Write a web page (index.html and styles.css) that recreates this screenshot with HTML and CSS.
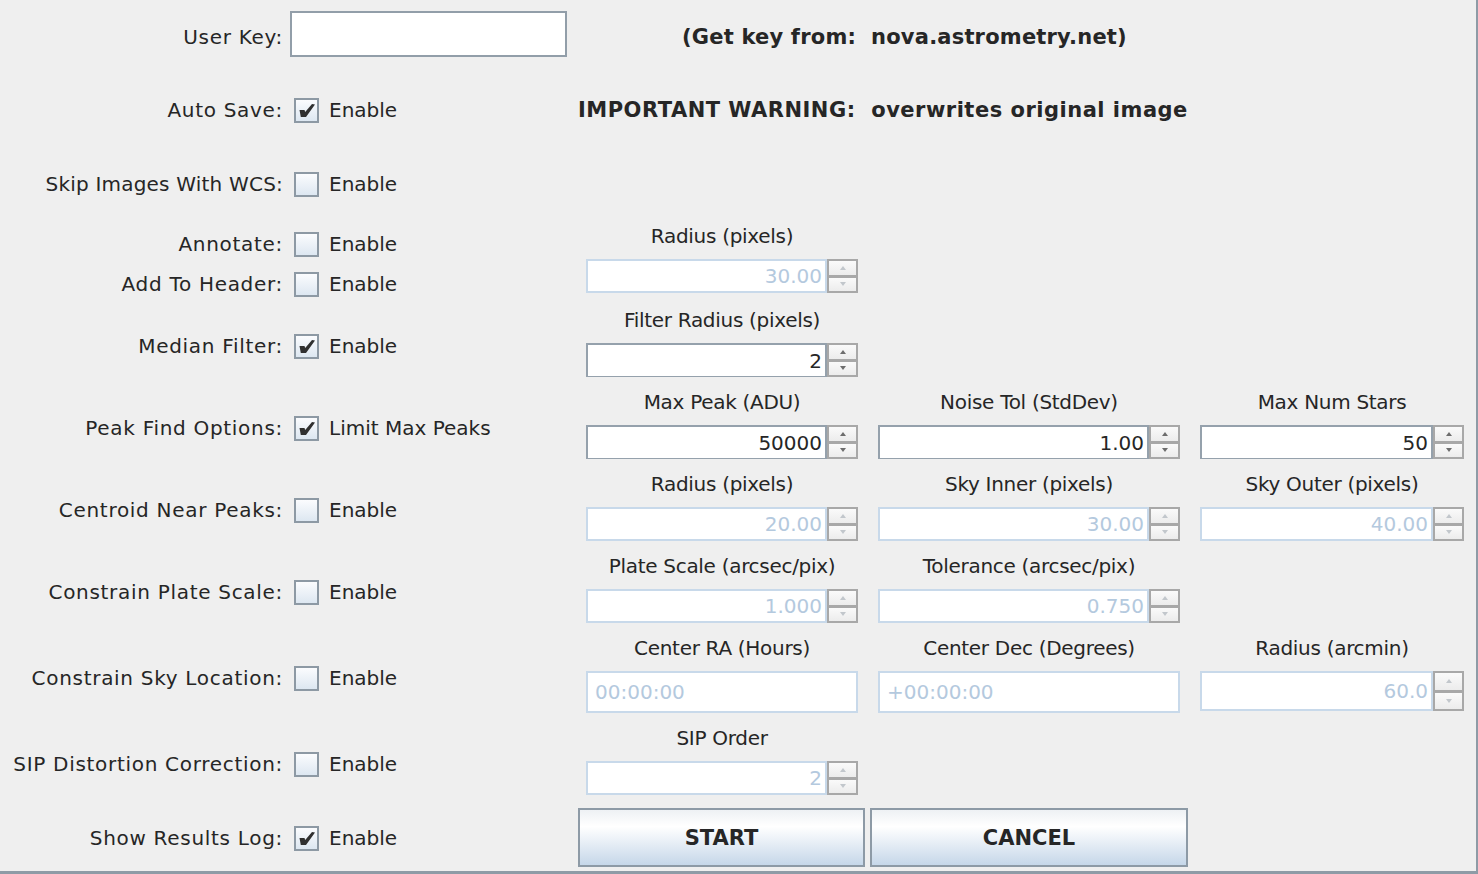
FILE: index.html
```html
<!DOCTYPE html>
<html lang="en">
<head>
    <meta charset="UTF-8">
    <title>Plate Solve</title>
    <link rel="stylesheet" href="styles.css">
</head>
<body>
    <div class="window">
        <!-- left side: option labels and check boxes -->
        <div class="options">
            <div class="opt-label">User Key:</div>
            <div class="opt-control key"><div class="key-input"></div></div>

            <div class="opt-label">Auto Save:</div>
            <div class="opt-control"><span class="check on"></span><span class="check-text">Enable</span></div>

            <div class="opt-label narrow">Skip Images With WCS:</div>
            <div class="opt-control"><span class="check"></span><span class="check-text">Enable</span></div>

            <div class="opt-label">Annotate:</div>
            <div class="opt-control"><span class="check"></span><span class="check-text">Enable</span></div>

            <div class="opt-label">Add To Header:</div>
            <div class="opt-control"><span class="check"></span><span class="check-text">Enable</span></div>

            <div class="opt-label">Median Filter:</div>
            <div class="opt-control"><span class="check on"></span><span class="check-text">Enable</span></div>

            <div class="opt-label">Peak Find Options:</div>
            <div class="opt-control"><span class="check on"></span><span class="check-text">Limit Max Peaks</span></div>

            <div class="opt-label">Centroid Near Peaks:</div>
            <div class="opt-control"><span class="check"></span><span class="check-text">Enable</span></div>

            <div class="opt-label">Constrain Plate Scale:</div>
            <div class="opt-control"><span class="check"></span><span class="check-text">Enable</span></div>

            <div class="opt-label">Constrain Sky Location:</div>
            <div class="opt-control"><span class="check"></span><span class="check-text">Enable</span></div>

            <div class="opt-label">SIP Distortion Correction:</div>
            <div class="opt-control"><span class="check"></span><span class="check-text">Enable</span></div>

            <div class="opt-label">Show Results Log:</div>
            <div class="opt-control"><span class="check on"></span><span class="check-text">Enable</span></div>
        </div>

        <!-- right side: notes, parameter fields, buttons -->
        <div class="params">
            <div class="note key">(Get key from:&nbsp; nova.astrometry.net)</div>
            <div class="note warning">IMPORTANT WARNING:&nbsp; overwrites original image</div>

            <div class="fields">
                <div class="field-row">
                    <div class="field">
                        <div class="field-label">Radius (pixels)</div>
                        <div class="spinner"><div class="value">30.00</div><div class="arrows"><span class="up"></span><span class="down"></span></div></div>
                    </div>
                </div>
                <div class="field-row">
                    <div class="field">
                        <div class="field-label">Filter Radius (pixels)</div>
                        <div class="spinner on"><div class="value">2</div><div class="arrows"><span class="up"></span><span class="down"></span></div></div>
                    </div>
                </div>
                <div class="field-row">
                    <div class="field">
                        <div class="field-label">Max Peak (ADU)</div>
                        <div class="spinner on"><div class="value">50000</div><div class="arrows"><span class="up"></span><span class="down"></span></div></div>
                    </div>
                    <div class="field">
                        <div class="field-label">Noise Tol (StdDev)</div>
                        <div class="spinner on"><div class="value">1.00</div><div class="arrows"><span class="up"></span><span class="down"></span></div></div>
                    </div>
                    <div class="field">
                        <div class="field-label">Max Num Stars</div>
                        <div class="spinner on"><div class="value">50</div><div class="arrows"><span class="up"></span><span class="down"></span></div></div>
                    </div>
                </div>
                <div class="field-row">
                    <div class="field">
                        <div class="field-label">Radius (pixels)</div>
                        <div class="spinner"><div class="value">20.00</div><div class="arrows"><span class="up"></span><span class="down"></span></div></div>
                    </div>
                    <div class="field">
                        <div class="field-label">Sky Inner (pixels)</div>
                        <div class="spinner"><div class="value">30.00</div><div class="arrows"><span class="up"></span><span class="down"></span></div></div>
                    </div>
                    <div class="field">
                        <div class="field-label">Sky Outer (pixels)</div>
                        <div class="spinner"><div class="value">40.00</div><div class="arrows"><span class="up"></span><span class="down"></span></div></div>
                    </div>
                </div>
                <div class="field-row">
                    <div class="field">
                        <div class="field-label">Plate Scale (arcsec/pix)</div>
                        <div class="spinner"><div class="value">1.000</div><div class="arrows"><span class="up"></span><span class="down"></span></div></div>
                    </div>
                    <div class="field">
                        <div class="field-label">Tolerance (arcsec/pix)</div>
                        <div class="spinner"><div class="value">0.750</div><div class="arrows"><span class="up"></span><span class="down"></span></div></div>
                    </div>
                </div>
                <div class="field-row">
                    <div class="field">
                        <div class="field-label">Center RA (Hours)</div>
                        <div class="text-field">00:00:00</div>
                    </div>
                    <div class="field">
                        <div class="field-label">Center Dec (Degrees)</div>
                        <div class="text-field">+00:00:00</div>
                    </div>
                    <div class="field">
                        <div class="field-label">Radius (arcmin)</div>
                        <div class="spinner tall"><div class="value">60.0</div><div class="arrows"><span class="up"></span><span class="down"></span></div></div>
                    </div>
                </div>
                <div class="field-row">
                    <div class="field">
                        <div class="field-label">SIP Order</div>
                        <div class="spinner"><div class="value">2</div><div class="arrows"><span class="up"></span><span class="down"></span></div></div>
                    </div>
                </div>
            </div>

            <div class="actions">
                <button class="btn start">START</button>
                <button class="btn cancel">CANCEL</button>
            </div>
        </div>
    </div>
</body>
</html>
```

FILE: styles.css
```css
* {
    box-sizing: border-box;
}

body {
    margin: 0;
    background-color: #efefef;
    font-family: "DejaVu Sans", sans-serif;
    font-size: 20px;
    color: #262626;
}

.window {
    width: 1478px;
    height: 874px;
    display: flex;
    border-right: 2px solid #8e9ba6;
    border-bottom: 3px solid #8e9ba6;
    overflow: hidden;
}

/* left column */
.options {
    width: 578px;
    flex: none;
    display: grid;
    grid-template-columns: 283px 1fr;
    grid-template-rows: 74px 72px 76px 44px 36px 88px 76px 88px 76px 96px 76px 72px;
    align-items: center;
}

.opt-label {
    text-align: right;
    white-space: nowrap;
    letter-spacing: 0.7px;
}

.opt-label.narrow {
    letter-spacing: 0.2px;
}

.opt-control {
    display: flex;
    align-items: center;
    padding-left: 11px;
    white-space: nowrap;
}

.opt-control.key {
    padding-left: 7px;
}

.key-input {
    width: 277px;
    height: 46px;
    margin-top: -6px;
    background-color: #fff;
    border: 2px solid #929ea9;
}

.check {
    width: 25px;
    height: 25px;
    flex: none;
    border: 2px solid #8d99a4;
    background: linear-gradient(#fbfcfe, #dde7f1);
}

.check.on {
    background: url("data:image/svg+xml,%3Csvg xmlns='http://www.w3.org/2000/svg' viewBox='0 0 21 21'%3E%3Cpolygon points='3.5,10 8.5,10 9.2,12 16,4 19,4.5 10,17 4.8,17' fill='%23303030'/%3E%3C/svg%3E") no-repeat center / 21px 21px, linear-gradient(#fbfcfe, #dde7f1);
}

.check-text {
    margin-left: 10px;
}

/* right column */
.params {
    flex: 1;
    padding-top: 25px;
}

.note {
    line-height: 24px;
    font-weight: bold;
    font-size: 21px;
    letter-spacing: 0.2px;
    white-space: nowrap;
}

.note.key {
    margin-left: 104px;
}

.note.warning {
    margin-top: 49px;
    letter-spacing: 0.5px;
}

.fields {
    margin-top: 102px;
    padding-left: 8px;
    display: flex;
    flex-direction: column;
    gap: 13px;
}

.field-row {
    display: grid;
    grid-template-columns: 272px 302px 264px;
    column-gap: 20px;
}

.field-row:first-child {
    margin-bottom: 2px;
}

.field-label {
    text-align: center;
    line-height: 24px;
    margin-bottom: 11px;
    white-space: nowrap;
    letter-spacing: -0.3px;
}

.spinner {
    display: flex;
    height: 34px;
}

.spinner.tall {
    height: 40px;
}

.spinner .value,
.text-field {
    flex: 1;
    background-color: #fff;
    border: 2px solid #c8d9ea;
    color: #b4c9de;
}

.spinner .value {
    padding-right: 3px;
    display: flex;
    align-items: center;
    justify-content: flex-end;
}

.spinner.on .value {
    border-color: #95a1ac;
    border-bottom-width: 1px;
    color: #262626;
}

.text-field {
    height: 42px;
    padding-left: 7px;
    line-height: 38px;
}

.arrows {
    width: 31px;
    flex: none;
    display: flex;
    flex-direction: column;
}

.arrows span {
    flex: 1;
    border: 2px solid #a8a8a8;
    background: linear-gradient(#fafafa, #ececec);
    display: flex;
    align-items: center;
    justify-content: center;
}

.arrows .down {
    border-top-width: 1px;
}

.arrows span::after {
    content: "";
    width: 0;
    height: 0;
    border-left: 3px solid transparent;
    border-right: 3px solid transparent;
}

.arrows .up::after {
    border-bottom: 4px solid #c2c7cc;
}

.arrows .down::after {
    border-top: 4px solid #c2c7cc;
}

.spinner.on .arrows .up::after {
    border-bottom-color: #6d6d6d;
}

.spinner.on .arrows .down::after {
    border-top-color: #6d6d6d;
}

.actions {
    display: flex;
    gap: 5px;
    margin-top: 13px;
}

.btn {
    height: 59px;
    border: 2px solid #8d9aa6;
    background: linear-gradient(#eef1f4, #ffffff 30%, #c6d7e9);
    font-family: "DejaVu Sans", sans-serif;
    font-weight: bold;
    font-size: 21px;
    color: #262626;
    padding: 0;
}

.btn.start {
    width: 287px;
}

.btn.cancel {
    width: 318px;
}
```
